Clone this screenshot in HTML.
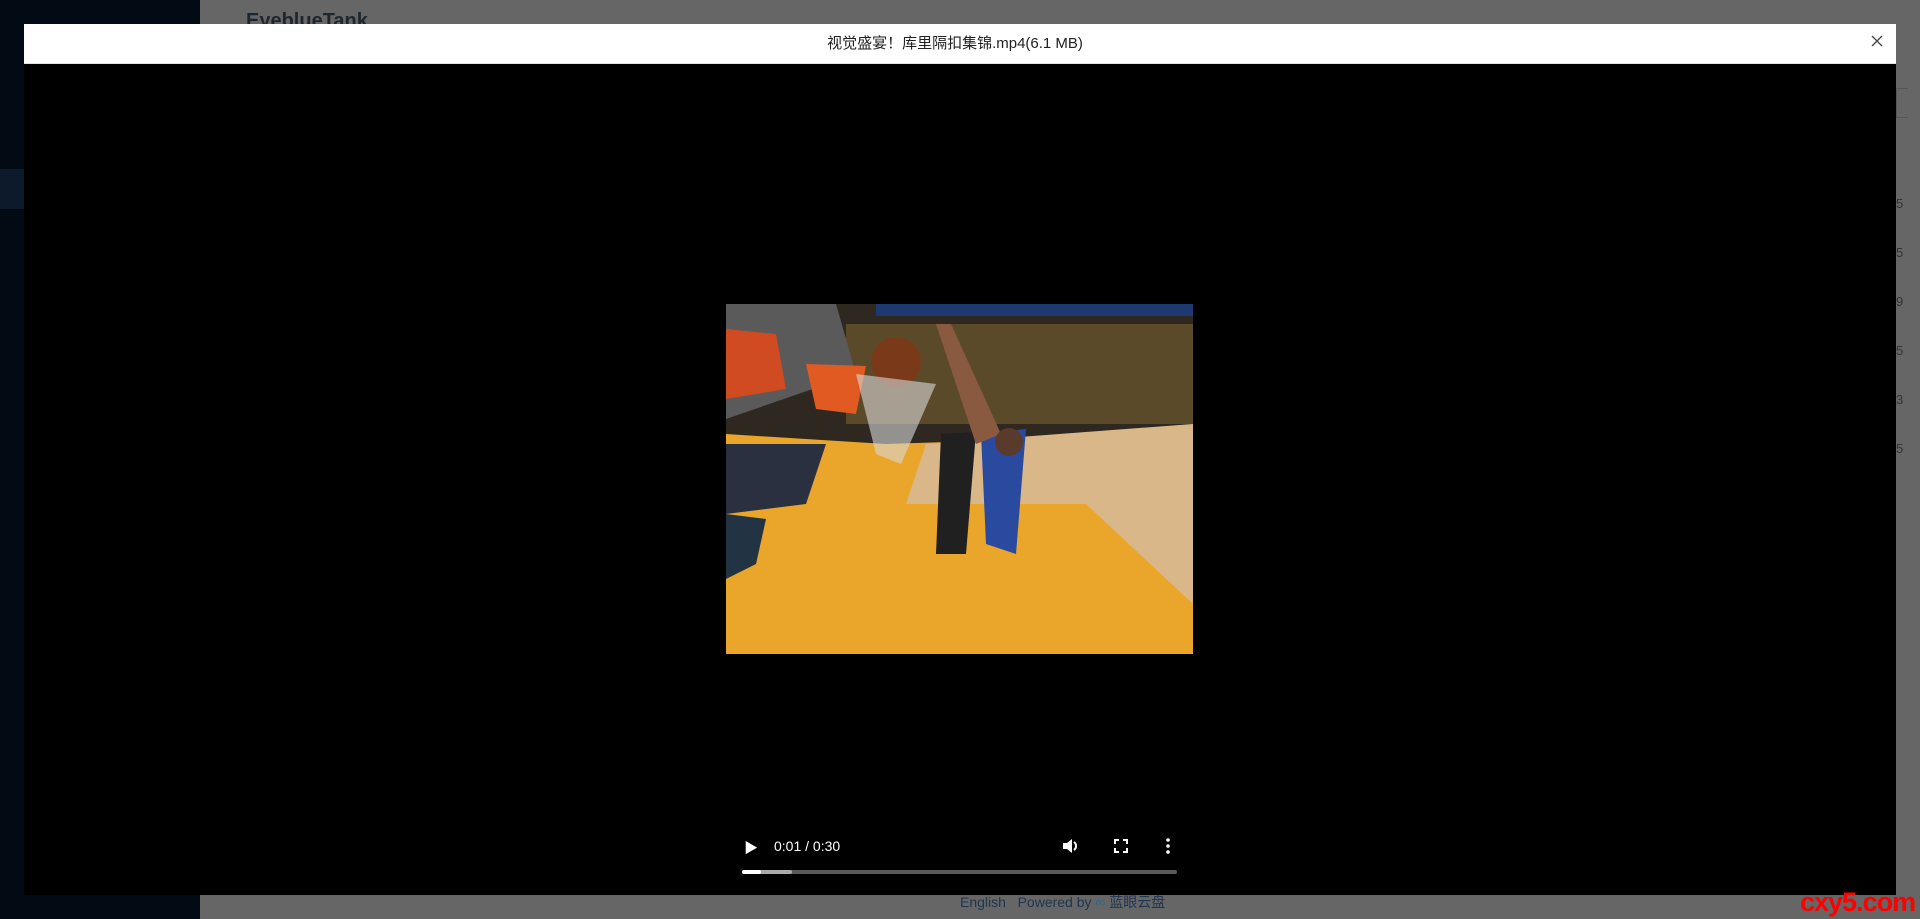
<!DOCTYPE html>
<html><head><meta charset="utf-8"><style>
*{margin:0;padding:0;box-sizing:border-box}
body{width:1920px;height:919px;overflow:hidden;background:#666;font-family:"Liberation Sans","Noto Sans CJK SC",sans-serif;position:relative}
.side{position:absolute;left:0;top:0;width:200px;height:919px;background:#020b14}
.side .hl{position:absolute;left:0;top:169px;width:200px;height:40px;background:#0c1a2b}
.logo{position:absolute;left:246px;top:10px;font-size:20px;font-weight:bold;color:#1c2630}
.row{position:absolute;left:1896px;width:16px;height:27px;color:#333;font-size:13px;line-height:27px}
.modal{position:absolute;left:24px;top:24px;width:1872px;height:871px;background:#000}
.mh{height:40px;background:#fff;border-bottom:1px solid #e5e5e5;text-align:center;font-size:15px;line-height:40px;color:#222;padding-right:10px}
.x{position:absolute;right:12px;top:10px;}
.vid{position:absolute;left:702px;top:280px;width:467px;height:350px}
.ctl{position:absolute;color:#fff;font-size:14px}
.foot{position:absolute;top:892px;left:960px;font-size:14px;color:#1e3550}
.wm{position:absolute;left:1800px;top:887px;font-size:27px;font-weight:bold;color:#f00;font-family:"Liberation Sans",sans-serif;letter-spacing:-1px}
</style></head><body>
<div class="side"><div class="hl"></div></div>
<div class="logo">EyeblueTank</div>
<div style="position:absolute;left:1896px;top:88px;width:12px;height:30px;border:1px solid #555;border-right:none"></div>
<div class="row" style="top:190px">5</div><div class="row" style="top:239px">5</div><div class="row" style="top:288px">9</div><div class="row" style="top:337px">5</div><div class="row" style="top:386px">3</div><div class="row" style="top:435px">5</div>
<div class="foot">English&nbsp;&nbsp; Powered by <span style="color:#2a6a8a">∞</span> 蓝眼云盘</div>
<div class="modal">
<div class="mh">视觉盛宴！库里隔扣集锦.mp4(6.1 MB)<svg class="x" width="14" height="14" viewBox="0 0 14 14"><path d="M2 2L12 12M12 2L2 12" stroke="#444" stroke-width="1.3"/></svg></div>
<svg class="vid" viewBox="0 0 467 350" preserveAspectRatio="none">
<rect width="467" height="350" fill="#2a2620"/>
<rect width="467" height="140" fill="#2e2820"/>
<rect x="120" y="20" width="347" height="100" fill="#5a4a2a"/>
<rect x="150" y="0" width="317" height="12" fill="#1c3a70"/>
<polygon points="0,130 160,140 467,130 467,350 0,350" fill="#e9a62a"/>
<polygon points="200,140 467,120 467,300 360,200 180,200" fill="#d9b789"/>
<polygon points="0,0 110,0 130,70 0,115" fill="#5a5a5a"/>
<polygon points="0,25 50,30 60,85 0,95" fill="#d04a22"/>
<polygon points="80,60 140,62 130,110 90,105" fill="#e05a22"/>
<polygon points="0,140 100,140 80,200 0,210" fill="#2a3040"/>
<circle cx="170" cy="58" r="25" fill="#7a3a1a"/>
<polygon points="130,70 210,80 175,160 150,150" fill="#d8d8d8" opacity=".6"/>
<polygon points="215,130 250,128 240,250 210,250" fill="#202020"/>
<polygon points="255,130 300,125 290,250 260,240" fill="#2a4aa0"/>
<polygon points="210,20 225,20 275,130 250,140" fill="#8a5a40"/>
<circle cx="283" cy="138" r="14" fill="#5a3a2a"/>
<polygon points="0,210 40,215 30,260 0,275" fill="#234"/>
</svg>
<div class="ctl" style="left:720px;top:814px;font-size:14px">▶</div>
<div class="ctl" style="left:750px;top:814px">0:01 / 0:30</div>
<svg class="ctl" style="left:1038px;top:814px" width="18" height="16" viewBox="0 0 18 16"><path d="M1 5h4l5-4v14l-5-4H1z" fill="#fff"/><path d="M12 4a5 5 0 0 1 0 8" stroke="#fff" stroke-width="2" fill="none"/></svg>
<svg class="ctl" style="left:1090px;top:815px" width="14" height="14" viewBox="0 0 14 14" fill="none" stroke="#fff" stroke-width="2"><path d="M1 5V1h4M9 1h4v4M13 9v4H9M5 13H1V9"/></svg>
<svg class="ctl" style="left:1142px;top:814px" width="4" height="16"><circle cx="2" cy="2" r="1.8" fill="#fff"/><circle cx="2" cy="8" r="1.8" fill="#fff"/><circle cx="2" cy="14" r="1.8" fill="#fff"/></svg>
<div style="position:absolute;left:718px;top:846px;width:435px;height:4px;background:#5a5a5a;border-radius:2px"></div>
<div style="position:absolute;left:718px;top:846px;width:50px;height:4px;background:#aaa;border-radius:2px"></div>
<div style="position:absolute;left:718px;top:846px;width:19px;height:4px;background:#fff;border-radius:2px"></div>
</div>
<div class="wm">cxy5.com</div>
</body></html>
